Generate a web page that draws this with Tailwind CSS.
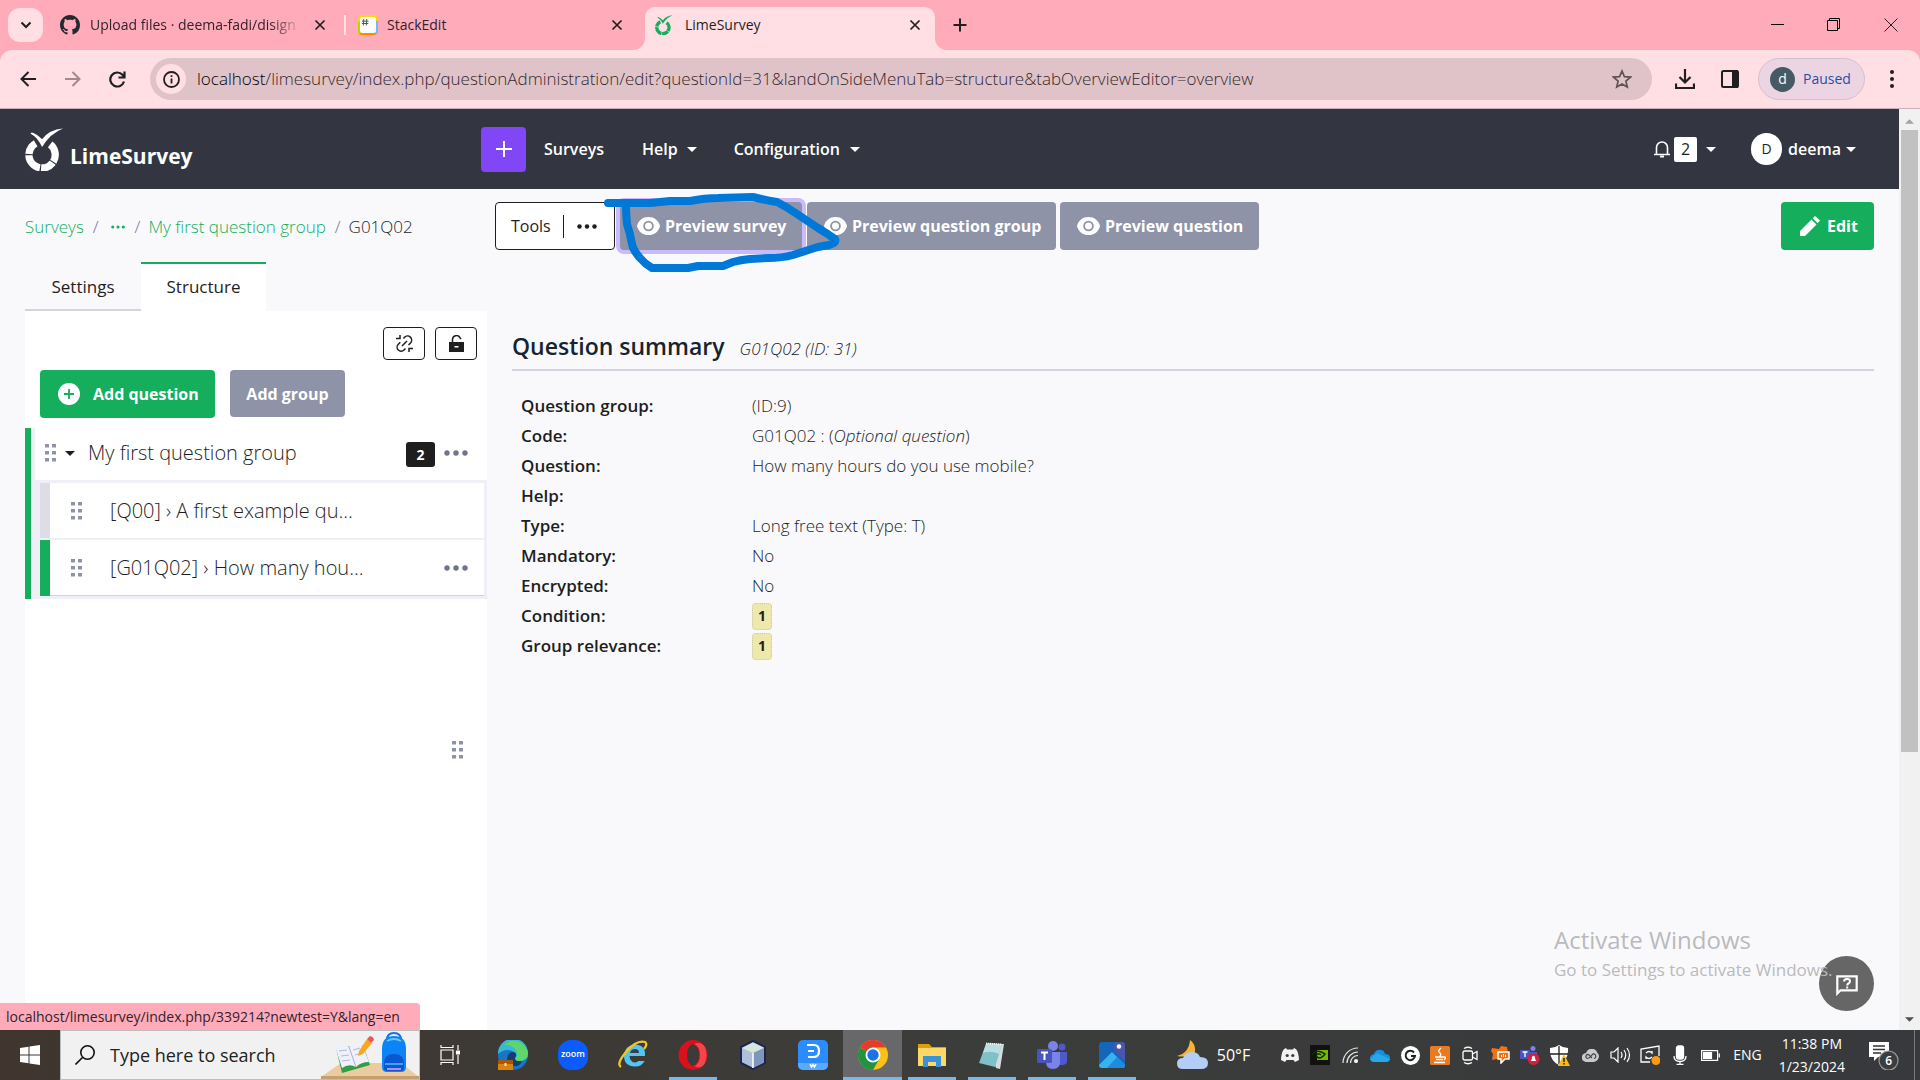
<!DOCTYPE html>
<html lang="en">
<head>
<meta charset="utf-8">
<meta name="viewport" content="width=device-width, initial-scale=1">
<title>LimeSurvey</title>
<script src="https://cdn.jsdelivr.net/npm/@tailwindcss/browser@4"></script>
</head>
<body class="relative flex h-screen flex-col overflow-hidden bg-[#f9f9fc] font-['Open_Sans',sans-serif] text-[#1e1e1e]">

<!-- Shared icon shapes -->
<svg class="hidden" aria-hidden="true">
  <symbol id="lime" viewBox="0 0 40 44">
    <path d="M7 4.500Q12.500 6 17.500 11.500Q25 1.500 39 .5Q26 5.500 17.500 19.500Q13 9.500 5.500 5.500Z" fill="currentColor"/>
    <circle cx="17.500" cy="27.500" r="13.500" fill="none" stroke="currentColor" stroke-width="7.500" stroke-dasharray="19.500 1.200 13.500 1.200 18.500 1.200 13.500 17.500" transform="rotate(-52 17.500 27.500)"/>
  </symbol>
  <symbol id="x" viewBox="0 0 12 12"><path d="M1.500 1.500l9 9m0-9l-9 9" stroke="currentColor" stroke-width="1.700" fill="none"/></symbol>
  <symbol id="eye" viewBox="0 0 24 20"><path d="M12 .5C6 .5 1.500 4 0 10c1.500 6 6 9.500 12 9.500S22.500 16 24 10C22.500 4 18 .5 12 .5Z" fill="#fff"/><circle cx="12" cy="10" r="4.600" fill="none" stroke="#8e93a7" stroke-width="1.900"/></symbol>
  <symbol id="grip" viewBox="0 0 11 18"><path d="M0 0h4v3.500H0zM7 0h4v3.500H7zM0 7h4v3.500H0zM7 7h4v3.500H7zM0 14h4v3.500H0zM7 14h4v3.500H7z" fill="#8e93a7"/></symbol>
  <symbol id="dots" viewBox="0 0 24 6"><circle cx="3" cy="3" r="2.700"/><circle cx="12" cy="3" r="2.700"/><circle cx="21" cy="3" r="2.700"/></symbol>
  <symbol id="caret" viewBox="0 0 10 5"><path d="M0 0h10L5 5z" fill="currentColor"/></symbol>
</svg>

<!-- Browser tab strip -->
<header class="flex shrink-0 flex-col bg-[#ffabba]">
  <div class="flex h-[50px] items-stretch pl-2">
    <button aria-label="Search tabs" class="mt-2 flex h-[34px] w-[35px] shrink-0 items-center justify-center rounded-xl bg-[#ffdee4]">
      <svg class="h-2 w-3" viewBox="0 0 12 8" fill="none" stroke="#1f1f1f" stroke-width="2"><path d="M1.500 1.500L6 6l4.500-4.500"/></svg>
    </button>
    <div class="flex w-[301px] shrink-0 items-center pl-[17px] text-sm text-[#30242a]">
      <svg class="h-5 w-5 shrink-0" viewBox="0 0 16 16" fill="#24292f"><path d="M8 0C3.580 0 0 3.580 0 8c0 3.540 2.290 6.530 5.470 7.590.4.070.55-.17.55-.38 0-.19-.01-.82-.01-1.490-2.010.37-2.530-.49-2.690-.94-.09-.23-.48-.94-.82-1.130-.28-.15-.68-.52-.01-.53.630-.01 1.080.58 1.230.82.72 1.210 1.870.87 2.330.66.070-.52.280-.87.510-1.070-1.780-.2-3.640-.89-3.640-3.950 0-.87.310-1.590.82-2.150-.08-.2-.36-1.020.08-2.120 0 0 .67-.21 2.200.82.64-.18 1.320-.27 2-.27s1.360.09 2 .27c1.530-1.040 2.200-.82 2.200-.82.44 1.100.16 1.920.08 2.120.51.56.82 1.270.82 2.150 0 3.070-1.870 3.750-3.650 3.950.29.25.54.73.54 1.480 0 1.070-.01 1.930-.01 2.200 0 .21.150.46.550.38A8.010 8.010 0 0016 8c0-4.420-3.580-8-8-8z"/></svg>
      <span class="ml-[10px] w-[212px] whitespace-nowrap [mask-image:linear-gradient(to_right,#000_85%,transparent)]">Upload files · deema-fadi/disign</span>
      <button aria-label="Close tab" class="ml-[12px] text-[#1f1f1f]"><svg class="h-3 w-3"><use href="#x"/></svg></button>
    </div>
    <div class="flex w-[301px] shrink-0 items-center text-sm text-[#30242a]">
      <span class="h-5 w-[2px] bg-[#ffdee4]"></span>
      <svg class="ml-3 h-5 w-5" viewBox="0 0 20 20"><rect width="20" height="20" rx="4" fill="#ffd700"/><path d="M0 6v10a4 4 0 004 4l4-8z" fill="#bbd500"/><path d="M20 5v11a4 4 0 01-4 4l-6-8z" fill="#75b7fd"/><path d="M1 19l6-5h8l3 5q-1 1-2 1H4q-2 0-3-1z" fill="#ff8a00"/><rect x="2" y="2" width="16" height="16" rx="2.500" fill="#fff"/><path d="M5.800 4L5.300 10.500M8.800 4L8.300 10.500M4 6.200h6.500M3.800 8.500h6.500" stroke="#555" fill="none"/></svg>
      <span class="ml-[9px] grow">StackEdit</span>
      <button aria-label="Close tab" class="mr-[22px] text-[#1f1f1f]"><svg class="h-3 w-3"><use href="#x"/></svg></button>
    </div>
    <div class="relative mt-[7px] flex w-[290px] shrink-0 items-center rounded-t-[10px] bg-[#ffdee4] pb-[7px] pl-[9px] text-sm text-[#1f1f1f]">
      <svg class="absolute bottom-0 -left-3 h-3 w-3" viewBox="0 0 12 12"><path d="M12 0v12H0A12 12 0 0012 0z" fill="#ffdee4"/></svg>
      <svg class="absolute -right-3 bottom-0 h-3 w-3" viewBox="0 0 12 12"><path d="M0 0v12h12A12 12 0 010 0z" fill="#ffdee4"/></svg>
      <svg class="h-5 w-5 text-[#14ae5c]"><use href="#lime"/></svg>
      <span class="ml-[11px] grow">LimeSurvey</span>
      <button aria-label="Close tab" class="mr-[14px]"><svg class="h-3 w-3"><use href="#x"/></svg></button>
    </div>
    <button aria-label="New tab" class="ml-[18px]"><svg class="h-[14px] w-[14px]" viewBox="0 0 14 14" stroke="#1f1f1f" stroke-width="2"><path d="M7 0.500v13M.5 7h13"/></svg></button>
    <div class="ml-auto flex items-center">
      <button aria-label="Minimize" class="flex w-14 justify-center"><svg class="h-[14px] w-[14px]" viewBox="0 0 14 14"><path d="M0 6.500h13" stroke="#000"/></svg></button>
      <button aria-label="Restore" class="flex w-14 justify-center"><svg class="h-[14px] w-[14px]" viewBox="0 0 14 14" fill="none" stroke="#000"><path d="M.5 2.500h10v10h-10zM2.500 2.500v-2h10v10h-2"/></svg></button>
      <button aria-label="Close window" class="flex w-[58px] justify-center"><svg class="h-[14px] w-[14px]" viewBox="0 0 14 14" stroke="#222"><path d="M.5.5l13 13M13.500.5l-13 13"/></svg></button>
    </div>
  </div>

  <!-- Address bar -->
  <div class="flex h-[59px] items-center rounded-t-xl border-b border-[#c9b0b8] bg-[#ffdee4] pl-5">
    <button aria-label="Back"><svg class="h-4 w-4" viewBox="0 0 16 16" fill="none" stroke="#1f1f1f" stroke-width="2"><path d="M16 8H1.500M8.500 1L1.500 8l7 7"/></svg></button>
    <button aria-label="Forward" class="ml-[29px]"><svg class="h-4 w-4" viewBox="0 0 16 16" fill="none" stroke="#a08a90" stroke-width="2"><path d="M0 8h14.500M7.500 1l7 7-7 7"/></svg></button>
    <button aria-label="Reload" class="ml-[28px]"><svg class="h-[17px] w-[17px]" viewBox="0 0 17 17" fill="none" stroke="#1f1f1f" stroke-width="2.200"><path d="M15 10.500A7 7 0 1113.500 3.800l1.500 2M15.500.5v6h-6"/></svg></button>
    <div class="ml-[24px] flex h-[42px] grow items-center rounded-full bg-[#e0c3c8] pr-[20px] pl-[6px]">
      <button aria-label="View site information" class="flex h-[30px] w-[30px] shrink-0 items-center justify-center rounded-full bg-[#ffdee4]">
        <svg class="h-[17px] w-[17px]" viewBox="0 0 17 17" fill="none" stroke="#1f1f1f" stroke-width="1.800"><circle cx="8.500" cy="8.500" r="7.500"/><path d="M8.500 7.500v5M8.500 4.300v1.800"/></svg>
      </button>
      <div class="ml-[11px] grow text-[17px] font-light whitespace-nowrap text-[#33282d]"><span class="text-black">localhost</span>/limesurvey/index.php/questionAdministration/edit?questionId=31&amp;landOnSideMenuTab=structure&amp;tabOverviewEditor=overview</div>
      <button aria-label="Bookmark this tab"><svg class="h-5 w-5" viewBox="0 0 20 20" fill="none" stroke="#5f5257" stroke-width="1.700"><path d="M10 2l2.400 5.600 6.100.5-4.600 4 1.400 6L10 14.900 4.700 18.100l1.400-6-4.600-4 6.100-.5z"/></svg></button>
    </div>
    <button aria-label="Downloads" class="ml-[23px]"><svg class="h-5 w-5" viewBox="0 0 20 20" fill="none" stroke="#1f1f1f" stroke-width="2.200"><path d="M10 0v13M4.500 8L10 13.500 15.500 8M1 14.500V19h18v-4.500"/></svg></button>
    <button aria-label="Side panel" class="ml-[26px]"><svg class="h-[18px] w-[18px]" viewBox="0 0 18 18"><rect x="1" y="1" width="16" height="16" rx="1.500" fill="none" stroke="#1f1f1f" stroke-width="2"/><path d="M11 0h6v18h-6z" fill="#1f1f1f"/></svg></button>
    <button class="ml-[19px] flex h-[42px] w-[107px] items-center rounded-full border border-[#d9bfcc] bg-[#ecd5e2] pl-[11px] text-sm text-[#1f4fa8]">
      <span class="mr-2 flex h-[25px] w-[25px] items-center justify-center rounded-full bg-[#455a64] text-white">d</span>Paused</button>
    <button aria-label="Browser menu" class="mr-[26px] ml-[25px]"><svg class="h-[18px] w-1" viewBox="0 0 4 18" fill="#1f1f1f"><circle cx="2" cy="2" r="2"/><circle cx="2" cy="9" r="2"/><circle cx="2" cy="16" r="2"/></svg></button>
  </div>
</header>

<!-- Page viewport -->
<div class="relative flex min-h-0 grow">
  <div class="flex min-w-0 grow flex-col">

    <nav class="flex h-20 shrink-0 items-center bg-[#333641] pr-[43px] pl-[25px] font-semibold text-white">
      <a href="#" class="flex w-[456px] items-center">
        <svg class="h-[43px] w-[39px]"><use href="#lime"/></svg>
        <span class="mt-[14px] ml-[6px] text-[21px] leading-7 font-bold">LimeSurvey</span>
      </a>
      <button aria-label="Create survey" class="flex h-[45px] w-[45px] items-center justify-center rounded bg-[#8146f6]"><svg class="h-4 w-4" viewBox="0 0 16 16" stroke="#fff" stroke-width="2"><path d="M8 0v16M0 8h16"/></svg></button>
      <a href="#" class="ml-[18px]">Surveys</a>
      <button class="ml-[38px] flex items-center gap-[9px]">Help <svg class="h-[5px] w-[10px]"><use href="#caret"/></svg></button>
      <button class="ml-[37px] flex items-center gap-[10px]">Configuration <svg class="h-[5px] w-[10px]"><use href="#caret"/></svg></button>
      <button class="ml-auto flex items-center" aria-label="Notifications">
        <svg class="h-[18px] w-4" viewBox="0 0 16 18" fill="none" stroke="#fff" stroke-width="1.600"><path d="M2.500 14V7.500a5.500 5.500 0 0111 0V14M0 14.500h16"/><path d="M6 16.500h4" stroke-width="2"/></svg>
        <span class="ml-1 flex h-[25px] w-[23px] items-center justify-center rounded-[2px] bg-white font-normal text-[#1e1e1e]">2</span>
        <svg class="ml-[9px] h-[5px] w-[10px]"><use href="#caret"/></svg>
      </button>
      <button class="ml-[35px] flex items-center">
        <span class="mr-[6px] flex h-8 w-[31px] items-center justify-center rounded-full bg-white text-sm font-normal text-[#1e1e1e]">D</span>deema<svg class="ml-[5px] h-[5px] w-[10px]"><use href="#caret"/></svg>
      </button>
    </nav>

    <div class="flex min-h-0 grow pr-[25px] pl-[25px]">
      <!-- Side menu -->
      <aside class="flex w-[462px] shrink-0 flex-col">
        <ol class="flex h-[73px] shrink-0 items-center pt-[2px] text-[17px] leading-6 font-light whitespace-nowrap">
          <li><a href="#" class="text-[#14ae5c]">Surveys</a></li>
          <li class="ml-[9px] text-[#6e748c]">/</li>
          <li class="ml-[12px]"><button aria-label="Show path" class="flex"><svg class="h-[4px] w-[14px] fill-[#14ae5c]"><use href="#dots"/></svg></button></li>
          <li class="ml-[10px] text-[#6e748c]">/</li>
          <li class="ml-[8px]"><a href="#" class="text-[#14ae5c]">My first question group</a></li>
          <li class="ml-[9px] text-[#6e748c]">/</li>
          <li class="ml-[8px]">G01Q02</li>
        </ol>
        <div class="flex h-[49px] shrink-0 text-[17px] font-medium">
          <button class="w-[116px] border-t-2 border-b-2 border-t-transparent border-b-[#d3d4de]">Settings</button>
          <button class="w-[125px] border-t-2 border-b-2 border-t-[#14ae5c] border-b-white bg-white">Structure</button>
        </div>
        <div class="relative grow bg-white">
          <div class="flex justify-end gap-[10px] pt-4 pr-[10px]">
            <button aria-label="Expand or collapse" class="flex h-[33px] w-[42px] items-center justify-center rounded-[4px] border border-[#1e1e1e]">
              <svg class="h-[17px] w-[17px]" viewBox="0 0 17 17" fill="none" stroke="#1e1e1e" stroke-width="1.500"><path d="M6 11l5-5M7.500 3.500l1-1.200a4 4 0 016 5.700l-2 2M9.500 13.500l-1.500 1.500a4 4 0 01-5.700-5.700l2-2M0 3.500h4V0M13 17v-3.500h4"/></svg>
            </button>
            <button aria-label="Unlock organizer" class="flex h-[33px] w-[42px] items-center justify-center rounded-[4px] border border-[#1e1e1e]">
              <svg class="h-[17px] w-[15px]" viewBox="0 0 15 17"><path d="M3.500 7V4.500a4 4 0 017.500-1.800l1 1.500" fill="none" stroke="#1e1e1e" stroke-width="1.500"/><path d="M0 7h15v10H0z" fill="#1e1e1e"/><path d="M5.500 11h4v1.500h-4z" fill="#fff"/></svg>
            </button>
          </div>
          <div class="flex items-start gap-[15px] pt-[10px] pl-[15px] font-bold text-white">
            <button class="flex h-12 w-[175px] items-center rounded-[4px] bg-[#14ae5c] pl-[18px]">
              <svg class="mr-[13px] h-[22px] w-[22px]" viewBox="0 0 22 22"><circle cx="11" cy="11" r="11" fill="#fff"/><path d="M11 6v10M6 11h10" stroke="#14ae5c" stroke-width="1.800"/></svg>Add question</button>
            <button class="h-[47px] w-[115px] rounded-[4px] bg-[#8e93a7]">Add group</button>
          </div>
          <!-- Question tree -->
          <div class="mt-[10px] border-l-[6px] border-[#14ae5c] bg-[#eeeff7] text-xl font-light text-[#1e1e1e]">
            <div class="ml-1 flex h-[52px] items-center bg-white pr-[19px] pb-[2px] pl-[10px]">
              <svg class="h-[18px] w-[11px]"><use href="#grip"/></svg>
              <svg class="ml-[9px] h-[5px] w-[10px]"><use href="#caret"/></svg>
              <a href="#" class="ml-[13px] grow">My first question group</a>
              <span class="mt-[3px] mr-[9px] flex h-[25px] w-[29px] items-center justify-center rounded-[3px] bg-[#1e1e1e] text-sm font-bold text-white">2</span>
              <button aria-label="Group actions"><svg class="h-[6px] w-6 fill-[#6e748c]"><use href="#dots"/></svg></button>
            </div>
            <ul class="flex flex-col gap-[2px] pt-[3px] pr-[3px] pb-[3px] pl-[9px]">
              <li class="flex h-[55px] items-center border-l-[10px] border-[#dddde8] bg-white pl-[21px]">
                <svg class="h-[18px] w-[11px]"><use href="#grip"/></svg>
                <a href="#" class="ml-[28px]">[Q00] › A first example qu…</a>
              </li>
              <li class="flex h-14 items-center border-l-[10px] border-[#14ae5c] bg-white pr-4 pl-[21px] shadow-[inset_0_-1px_0_#d3d4d8]">
                <svg class="h-[18px] w-[11px]"><use href="#grip"/></svg>
                <a href="#" class="ml-[28px] grow">[G01Q02] › How many hou…</a>
                <button aria-label="Question actions"><svg class="h-[6px] w-6 fill-[#6e748c]"><use href="#dots"/></svg></button>
              </li>
            </ul>
          </div>
          <button aria-label="Resize side menu" class="absolute top-[430px] right-6"><svg class="h-[18px] w-[11px]"><use href="#grip"/></svg></button>
        </div>
      </aside>

      <!-- Question overview -->
      <main class="min-w-0 grow">
        <div class="flex pt-[13px] pl-2 font-bold text-white">
          <button class="flex h-12 w-[120px] items-center rounded-[4px] border border-[#1e1e1e] bg-white pl-[15px] font-medium text-[#1e1e1e]">Tools<span class="ml-[12px] h-[23px] w-px bg-[#1e1e1e]"></span><svg class="ml-[13px] h-[5px] w-5 fill-[#1e1e1e]"><use href="#dots"/></svg></button>
          <button class="ml-[5px] flex h-12 w-[182px] items-center rounded-[4px] bg-[#8e93a7] pl-[17px] shadow-[0_0_0_4px_#c9bafd]"><svg class="mr-[5px] h-5 w-[23px]"><use href="#eye"/></svg>Preview survey</button>
          <button class="ml-[5px] flex h-12 w-[249px] items-center rounded-[4px] bg-[#8e93a7] pl-[17px]"><svg class="mr-[5px] h-5 w-[23px]"><use href="#eye"/></svg>Preview question group</button>
          <button class="ml-1 flex h-12 w-[199px] items-center rounded-[4px] bg-[#8e93a7] pl-[17px]"><svg class="mr-[5px] h-5 w-[23px]"><use href="#eye"/></svg>Preview question</button>
          <button class="ml-auto flex h-12 w-[93px] items-center rounded-[4px] bg-[#14ae5c] pl-[19px]"><svg class="mr-[7px] h-5 w-5" viewBox="0 0 20 20" fill="#fff"><path d="M0 20v-5L11.500 3.500l5 5L5 20zM12.800 2.200L15 0l5 4.500-2.300 2.700z"/></svg>Edit</button>
        </div>
        <section class="ml-[25px]">
          <h1 class="flex items-baseline gap-[15px] border-b-2 border-[#d3d4de] pt-[79px] pb-[3px] text-[23px] leading-[34px] font-semibold text-[#162331]">Question summary <em class="text-[17px] font-light text-[#1e1e1e]">G01Q02 (ID: 31)</em></h1>
          <table class="mt-5 ml-[9px] text-left text-[17px] leading-[30px] font-light">
            <tbody>
              <tr><th scope="row" class="w-[231px] font-semibold">Question group:</th><td>(ID:9)</td></tr>
              <tr><th scope="row" class="font-semibold">Code:</th><td>G01Q02 : (<em>Optional question</em>)</td></tr>
              <tr><th scope="row" class="font-semibold">Question:</th><td>How many hours do you use mobile?</td></tr>
              <tr><th scope="row" class="font-semibold">Help:</th><td></td></tr>
              <tr><th scope="row" class="font-semibold">Type:</th><td>Long free text (Type: T)</td></tr>
              <tr><th scope="row" class="font-semibold">Mandatory:</th><td>No</td></tr>
              <tr><th scope="row" class="font-semibold">Encrypted:</th><td>No</td></tr>
              <tr><th scope="row" class="font-semibold">Condition:</th><td><span class="flex h-[27px] w-[20px] items-center justify-center rounded-[4px] border border-dotted border-[#c9c9a8] bg-[#eee8aa] text-sm font-bold">1</span></td></tr>
              <tr><th scope="row" class="font-semibold">Group relevance:</th><td><span class="flex h-[27px] w-[20px] items-center justify-center rounded-[4px] border border-dotted border-[#c9c9a8] bg-[#eee8aa] text-sm font-bold">1</span></td></tr>
            </tbody>
          </table>
        </section>
      </main>
    </div>
  </div>

  <!-- Scrollbar -->
  <div class="flex w-[21px] shrink-0 flex-col items-center bg-[#f1f1f1]">
    <span class="flex h-[21px] items-center"><svg class="mt-1 h-[5px] w-[9px] rotate-180 text-[#a3a3a3]"><use href="#caret"/></svg></span>
    <span class="h-[67.5%] w-[17px] bg-[#c1c1c1]"></span>
    <span class="mt-auto flex h-[21px] items-center"><svg class="h-[5px] w-[9px] text-[#505050]"><use href="#caret"/></svg></span>
  </div>

  <!-- Help bubble and activation notice -->
  <button aria-label="Help" class="absolute right-[46px] bottom-[19px] flex h-[55px] w-[55px] items-center justify-center rounded-full bg-[#666]">
    <svg class="mt-1 h-[21px] w-[22px]" viewBox="0 0 22 21"><path d="M1.300 18.500V1.300h19.400v14H4.500z" fill="none" stroke="#fff" stroke-width="2.200"/><path d="M8 6.500q0-2.500 3-2.500t3 2.300q0 1.400-1.600 2.200-1.200.6-1.200 2M11.200 11.600v2" fill="none" stroke="#fff" stroke-width="2"/></svg>
  </button>
  <div class="pointer-events-none absolute right-[82px] bottom-[46px] w-[284px] whitespace-nowrap text-[#b9babc]">
    <p class="text-2xl leading-8">Activate Windows</p>
    <p class="text-[17px] leading-7">Go to Settings to activate Windows.</p>
  </div>

  <div class="absolute bottom-0 left-0 flex h-[27px] w-[420px] items-center rounded-tr-[4px] border-t border-r border-[#cfc3c6] bg-[#ffabba] pl-[6px] text-sm text-[#30242a]">localhost/limesurvey/index.php/339214?newtest=Y&amp;lang=en</div>

  <!-- Pen stroke around the preview button -->
  <svg class="pointer-events-none absolute top-[81px] left-[600px] h-[90px] w-[250px]" viewBox="600 190 250 90" fill="none" stroke="#0078d7" stroke-width="8" stroke-linecap="round" stroke-linejoin="round"><path d="M608 203H650Q660 202 670 201L690 201Q705 198 718 198L753 197Q765 200 777 202Q787 207 797 214L818 228Q828 234 835 239Q837 243 829 245L818 247Q805 251 793 255Q782 258 768 258L750 259Q740 260 733 262L723 266H698L688 268H652Q645 264 640 258Q633 250 632 244Q630 233 627 224Q626 213 626 206"/></svg>
</div>

<!-- Taskbar -->
<footer class="flex h-[50px] shrink-0 items-stretch bg-linear-to-r from-[#40352f] via-[#3b3d3a] to-[#38393c] text-white">
  <button aria-label="Start" class="flex w-[60px] shrink-0 items-center justify-center"><svg class="h-5 w-5" viewBox="0 0 20 20" fill="#fff"><path d="M0 3l8.500-1.200v7.700H0zM9.500 1.600L20 0v9.500H9.500zM0 10.500h8.500v7.700L0 17zM9.500 10.500H20V20L9.500 18.400z"/></svg></button>
  <label class="flex w-[360px] shrink-0 items-center border border-[#bdbdbd] bg-[#f1f1f1] pl-[14px]">
    <svg class="h-5 w-5 shrink-0" viewBox="0 0 20 20" fill="none" stroke="#111" stroke-width="1.600"><circle cx="12.500" cy="7.500" r="6.700"/><path d="M7.500 12.500L.5 19.500"/></svg>
    <input type="text" aria-label="Search" placeholder="Type here to search" class="ml-[15px] w-[211px] bg-transparent text-lg text-black outline-none placeholder:text-[#222]">
    <svg class="h-12 w-[98px] shrink-0" viewBox="0 0 98 48"><path d="M20 32h60l18 14H0z" fill="#eccba0"/><path d="M0 45h98v3H0z" fill="#c59f6e"/>
      <path d="M15 17l27-3 7 20-28 8z" fill="#2f9e44"/><path d="M14 15q7-3 14 1 6-5 13-3l7 18q-8 0-13 5-7-4-14 1z" fill="#eef1fb"/><path d="M28 16l7 20" stroke="#aab0cc"/><path d="M18 20l8-1M20 25l8-1M21 30l8-1M32 19l7-2M34 24l7-2" stroke="#b3b9d2"/><path d="M38 20l8-12 5 4-9 11-5 2z" fill="#f7a823"/><path d="M46 8l3-3q4 1 4 4l-3 3z" fill="#f2545b"/>
      <path d="M66 9q0-7 7-7t7 7" fill="none" stroke="#1572e8" stroke-width="2"/><path d="M61 18Q61 5 73 5t12 13v18q0 5-5 5H66q-5 0-5-5z" fill="#0d84f5"/><path d="M66 10q7-4 14 0" stroke="#6cc5ff" stroke-width="2" fill="none"/><path d="M63 32q0-9 10-9t10 9v5q0 3-3 3H66q-3 0-3-3z" fill="#0a57cf"/><path d="M64 33h18" stroke="#35a4ff" stroke-width="2"/><path d="M66 38h14" stroke="#b78bff" stroke-width="2"/></svg>
  </label>
  <button aria-label="Task view" class="flex w-[60px] shrink-0 items-center justify-center"><svg class="h-5 w-5" viewBox="0 0 20 20" fill="none" stroke="#fff" stroke-width="1.200"><path d="M1 5h12v10H1zM1 0v2.500h12V0M1 20v-2.500h12V20M18 0v5M18 10v9"/><path d="M16.500 6h3v3h-3z" fill="#fff"/></svg></button>

  <button aria-label="Edge" class="ml-[3px] flex w-[60px] shrink-0 items-center justify-center"><svg class="h-[30px] w-[30px]" viewBox="0 0 30 30"><circle cx="15" cy="15" r="15" fill="#1676c8"/><path d="M0 14A15 15 0 0130 13q0 8-9 8-5 0-4-3 2-3-1-6-8-5-16 2z" fill="#39b8d8"/><path d="M12 1A15 15 0 0130 13q0 8-9 8-5 0-4-3 4-2 1-8-5-6-12-5z" fill="#5fd66c"/><path d="M9 20q0-8 7-8 4 2 1 6 0 4 7 3-2 6-8 5-7-1-7-6z" fill="#123f72"/><path d="M0 20h15v10H0z" fill="#d98412"/><path d="M0 20h15v4H0z" fill="#a5580a"/><path d="M6.500 23h2v3h-2z" fill="#ffe08a"/></svg></button>
  <button aria-label="Zoom" class="flex w-[60px] shrink-0 items-center justify-center"><span class="flex h-[30px] w-[30px] items-center justify-center rounded-[13px] bg-[#0b5cff] pb-1 text-[9px] leading-none font-semibold">zoom</span></button>
  <button aria-label="Internet Explorer" class="flex w-[60px] shrink-0 items-center justify-center"><svg class="h-[30px] w-[30px]" viewBox="0 0 30 30" fill="none"><path d="M6 16h21q1-11-10-11.500Q7 5 6 16q0 10 11 10.500 7 0 9.500-5.500h-6q-4 3-7 0-2-2-2-5" fill="#54c4f2"/><path d="M12 13q1-4 5-4t4 4z" fill="#3f3d41"/><path d="M3 27Q-2 24 8 12T27 2q3 2-1 7" stroke="#f3c623" stroke-width="2.300"/></svg></button>
  <button aria-label="Opera" class="mx-[6px] flex w-12 shrink-0 items-center justify-center border-b-[3px] border-[#76b9ed] pt-[3px]"><svg class="h-[30px] w-[30px]" viewBox="0 0 30 30"><path fill-rule="evenodd" d="M15 0a14.500 15 0 100 30 14.500 15 0 000-30zm0 4q6 2 6 11t-6 11q-6-2-6-11t6-11z" fill="#d9101e"/><path d="M16 4q6 2 6 11t-6 11q7 4 11-3 3-8 0-16-4-6-11-3z" fill="#f2454c"/></svg></button>
  <button aria-label="NetBeans" class="flex w-[60px] shrink-0 items-center justify-center"><svg class="h-[30px] w-[28px]" viewBox="0 0 28 30"><path d="M14 1l12 6v16l-12 6L2 23V7z" fill="#aebfd9" stroke="#1b2550" stroke-width="2"/><path d="M14 2.500L25 8l-11 5L3 8z" fill="#d6e6df"/><path d="M14 13l11-5v14.500L14 28z" fill="#7f97bb"/><path d="M14 13v15" stroke="#fff" stroke-width="1.500"/></svg></button>
  <button aria-label="WPS" class="flex w-[60px] shrink-0 items-center justify-center"><svg class="h-[30px] w-[30px]" viewBox="0 0 30 30" fill="none" stroke="#fff"><rect width="30" height="30" rx="5" fill="#2b8cff" stroke="none"/><path d="M0 23h30v2a5 5 0 01-5 5H5a5 5 0 01-5-5z" fill="#5aa9ff" stroke="none"/><path d="M9 5h7q5 0 5 6t-5 6H10M10 11h6" stroke-width="2.200"/><path d="M12 24l1.500 3 1.500-2.500 1.500 2.500 1.500-3" stroke-width="1.500"/></svg></button>
  <button aria-label="Chrome" class="flex w-[59px] shrink-0 items-center justify-center border-b-[3px] border-[#76b9ed] bg-[#68686b] pt-[3px]"><svg class="h-[30px] w-[30px]" viewBox="0 0 30 30"><circle cx="15" cy="15" r="15" fill="#fbc116"/><path d="M15 15L2 7.500A15 15 0 0128 7.500H15z" fill="#e33b2e"/><path d="M15 15L2 7.500A15 15 0 0015 30l6.500-11.300z" fill="#229342"/><circle cx="15" cy="15" r="7.500" fill="#fff"/><circle cx="15" cy="15" r="5.700" fill="#1a73e8"/></svg></button>
  <button aria-label="File Explorer" class="ml-[6px] flex w-12 shrink-0 items-center justify-center border-b-[3px] border-[#76b9ed] pt-[3px]"><svg class="h-[24px] w-[28px]" viewBox="0 0 28 24"><path d="M0 1h11l3 3h14v19H0z" fill="#e0a100"/><path d="M0 5h28v18H0z" fill="#ffd767"/><path d="M5 24V13h18v11h-5v-5h-8v5z" fill="#3a93d8"/></svg></button>
  <button aria-label="Notepad" class="ml-3 flex w-12 shrink-0 items-center justify-center border-b-[3px] border-[#76b9ed] pt-[3px]"><svg class="h-[27px] w-[28px]" viewBox="0 0 28 27"><path d="M9 1l17 1-4 25-4-1z" fill="#d9dcdc"/><path d="M8 2l16 1-7 22L1 21z" fill="#7fc0c9"/><path d="M8 2l16 1-3 9q-8-4-16-1z" fill="#b9dfe3"/><path d="M8 1.500l16 1" stroke="#eee" stroke-width="2" stroke-dasharray="1 1"/></svg></button>
  <button aria-label="Teams" class="ml-3 flex w-12 shrink-0 items-center justify-center border-b-[3px] border-[#76b9ed] pt-[3px]"><svg class="h-[28px] w-[30px]" viewBox="0 0 30 28"><circle cx="25" cy="6" r="3.500" fill="#5059c9"/><path d="M20 11h10v9q0 4-5 4h-5z" fill="#5059c9"/><circle cx="16" cy="5" r="5" fill="#7b83eb"/><path d="M9 11h14v10q0 7-7 7t-7-7z" fill="#7b83eb"/><rect y="8" width="15" height="14" rx="1.500" fill="#4b53bc"/><path d="M4 11.500h7M7.500 11.500V19" stroke="#fff" stroke-width="2"/></svg></button>
  <button aria-label="Photos" class="ml-3 flex w-12 shrink-0 items-center justify-center border-b-[3px] border-[#76b9ed] pt-[3px]"><svg class="h-[26px] w-[26px]" viewBox="0 0 26 26"><rect width="26" height="26" rx="3" fill="#1565b8"/><path d="M16 0h7q3 0 3 3v16L14 8z" fill="#4a55ad"/><path d="M0 23L13 10l13 13q0 3-3 3H3q-3 0-3-3z" fill="#35b4f0"/><path d="M8 26l10-11 8 8q0 3-3 3z" fill="#1d8be0"/><circle cx="20" cy="4.500" r="2.300" fill="#fff"/></svg></button>

  <!-- Notification area -->
  <div class="ml-auto flex shrink-0 items-center pr-[5px]">
    <button class="mr-[25px] flex items-center gap-[9px] text-base"><svg class="h-[30px] w-[31px]" viewBox="0 0 31 30"><path d="M13 0q6 4 5 12-6 6-18 4 12-3 13-16z" fill="#f9b233"/><path d="M6 29q-6 0-6-5.500T6 18q2-6 9-6 6 0 8 5 8 0 8 6t-7 6z" fill="#b3cdf7"/></svg>50°F</button>
    <div class="flex items-center">
      <span class="flex w-[30px] justify-center"><svg class="h-[14px] w-[18px]" viewBox="0 0 18 14"><path d="M5 0l1 1.500h6L13 0q3 1 4 5t1 7l-4 2-1.500-2h-7L4 14l-4-2q0-3 1-7t4-5z" fill="#f2f2f2"/><circle cx="6.200" cy="7.500" r="1.600" fill="#3b3d3a"/><circle cx="11.800" cy="7.500" r="1.600" fill="#3b3d3a"/></svg></span>
      <span class="flex w-[30px] justify-center"><svg class="h-5 w-5" viewBox="0 0 20 20" fill="none"><path d="M0 0h20v20H0z" fill="#111"/><path d="M7 5h11v10H7z" fill="#76b900"/><path d="M2 10q5-7 13-1-5 7-9 2 2-4 5-1" stroke="#0d2a00" stroke-width="1.500"/></svg></span>
      <span class="flex w-[30px] justify-center"><svg class="h-4 w-4" viewBox="0 0 16 16" fill="none" stroke="#e5e5e5" stroke-width="1.200"><path d="M1 16A15 15 0 0116 1M5 16A11 11 0 0116 5M8.500 16A7.500 7.500 0 0116 8.500"/><circle cx="14" cy="14" r="1.500" fill="#fff"/></svg></span>
      <span class="flex w-[30px] justify-center"><svg class="h-[13px] w-5" viewBox="0 0 20 13"><path d="M4 13q-4-1-4-4t4-4q2-5 7-4 3 0 4 4 5 0 5 4t-4 4z" fill="#1490df"/><path d="M7 4l13 6q-1 3-4 3H4q-3 0-4-3z" fill="#28a8ea"/></svg></span>
      <span class="flex w-[30px] justify-center"><svg class="h-[19px] w-[19px]" viewBox="0 0 19 19" fill="none"><circle cx="9.500" cy="9.500" r="9.500" fill="#fff"/><path d="M13 6.500A4.700 4.700 0 1014 10h-4" stroke="#222" stroke-width="2"/></svg></span>
      <span class="flex w-[30px] justify-center"><svg class="h-[19px] w-5" viewBox="0 0 20 19" fill="none"><rect width="20" height="19" rx="1.500" fill="#e87b22"/><path d="M11 2q-4 3-1 5 2 2-1 4M5 11h9q3 0 0 3M6 13.500h7M4 16.500h11" stroke="#fff" stroke-width="1.300"/></svg></span>
      <span class="flex w-[30px] justify-center"><svg class="h-[19px] w-4" viewBox="0 0 16 19" fill="none" stroke="#fff" stroke-width="1.300"><rect x="1" y="5" width="9.500" height="9" rx="1.500"/><path d="M10.500 8L15 5.500v8L10.500 11M2 2.500Q6 0 10 2.500M2 16.500q4 2.500 8 0"/></svg></span>
      <span class="flex w-[30px] justify-center"><svg class="h-[18px] w-[19px]" viewBox="0 0 19 18"><path d="M1 2l7 1 2-3 6 1 1 6-7 5-9 2 1-6-2-3z" fill="#f07318"/><path d="M7 6h11v7h-4l-4 4v-4H7z" fill="#f07318" stroke="#fff" stroke-width="1.500"/><path d="M10.500 11V9M12.500 11V8M14.500 11V9" stroke="#fff"/></svg></span>
      <span class="flex w-[30px] justify-center"><svg class="h-[19px] w-5" viewBox="0 0 20 19"><path d="M0 4h10v9H0z" fill="#4b53bc"/><path d="M2.500 6h5M5 6v5" stroke="#fff" stroke-width="1.300"/><circle cx="13" cy="2.500" r="2.500" fill="#7b83eb"/><path d="M10 6h7v5h-7z" fill="#5059c9"/><circle cx="13.500" cy="13" r="6" fill="#d0213f"/><path d="M10.500 15q1.500-1 1.500-4 1.500-2.500 3 0 0 3 1.500 4z" fill="#fff"/></svg></span>
      <span class="flex w-[30px] justify-center"><svg class="h-[21px] w-5" viewBox="0 0 20 21"><path d="M9 0q4 3 9 3 1 12-9 17Q-1 15 0 3q5 0 9-3z" fill="#fff"/><path d="M9 1v18M0 9h18" stroke="#222" stroke-width="1.300"/><path d="M14 9l6 12H8z" fill="#fdb913"/><path d="M14 13v4M14 18v1.500" stroke="#222" stroke-width="1.500"/></svg></span>
      <span class="flex w-[30px] justify-center"><svg class="h-[13px] w-[17px]" viewBox="0 0 17 13" fill="none"><path d="M4.500 13a4.500 4.500 0 01-.5-9A6 6 0 0115.500 4q3 3 0 7-2 2-4 2z" fill="#c9c9c9"/><path d="M10 9L6.500 5.500a2 2 0 10-1 4q2 0 4-3t4-.5q1 3-1.500 3.500" stroke="#444" stroke-width="1.200"/></svg></span>
      <span class="flex w-[30px] justify-center"><svg class="h-4 w-[21px]" viewBox="0 0 21 16" fill="none" stroke="#fff" stroke-width="1.200"><path d="M1 5h3l4-4v14l-4-4H1zM11 5q2 3 0 6M14 3q3.500 5 0 10M17 1q5 7 0 14"/></svg></span>
      <span class="flex w-[30px] justify-center"><svg class="h-5 w-5" viewBox="0 0 20 20" fill="none" stroke="#fff" stroke-width="1.300"><path d="M10 17H1V4l18-3v10M6 8q3-3 6 0V6M12 12q-3 3-6 0v2"/><circle cx="16" cy="15.500" r="4.500" fill="#ff9a16" stroke="none"/></svg></span>
      <span class="flex w-[30px] justify-center"><svg class="h-5 w-[14px]" viewBox="0 0 14 20" fill="none" stroke="#fff" stroke-width="1.300"><rect x="3.500" y="1" width="7" height="13" rx="2" fill="#fff"/><path d="M1 11q0 5.500 6 5.500t6-5.500M7 16v3.500M3.500 19.500h7"/></svg></span>
      <span class="flex w-[30px] justify-center"><svg class="h-[11px] w-[19px]" viewBox="0 0 19 11" fill="none" stroke="#fff" stroke-width="1.200"><path d="M.6.6h16v9.800H.6zM18.300 3.500v4"/><path d="M2.500 2.500h8v6h-8z" fill="#fff"/></svg></span>
    </div>
    <span class="ml-2 text-sm">ENG</span>
    <time class="ml-[17px] text-center text-sm leading-[23px]">11:38 PM<br>1/23/2024</time>
    <button aria-label="Notifications" class="relative ml-[24px] h-[30px] w-[30px]">
      <svg class="h-[30px] w-[30px]" viewBox="0 0 30 30" fill="none"><path d="M0 2h20v15H9l-4 4v-4H0z" fill="#fff"/><path d="M4 6h12M4 9.500h12M4 13h8" stroke="#333" stroke-width="1.300"/><circle cx="19.500" cy="20.500" r="9.500" fill="#3c3d40" stroke="#999" stroke-width="1.200"/></svg>
      <span class="absolute right-[7px] bottom-[1px] text-xs leading-4 font-semibold">6</span>
    </button>
    <span class="ml-[15px] h-[50px] w-px bg-[#77787a]"></span>
  </div>
</footer>
</body>
</html>
